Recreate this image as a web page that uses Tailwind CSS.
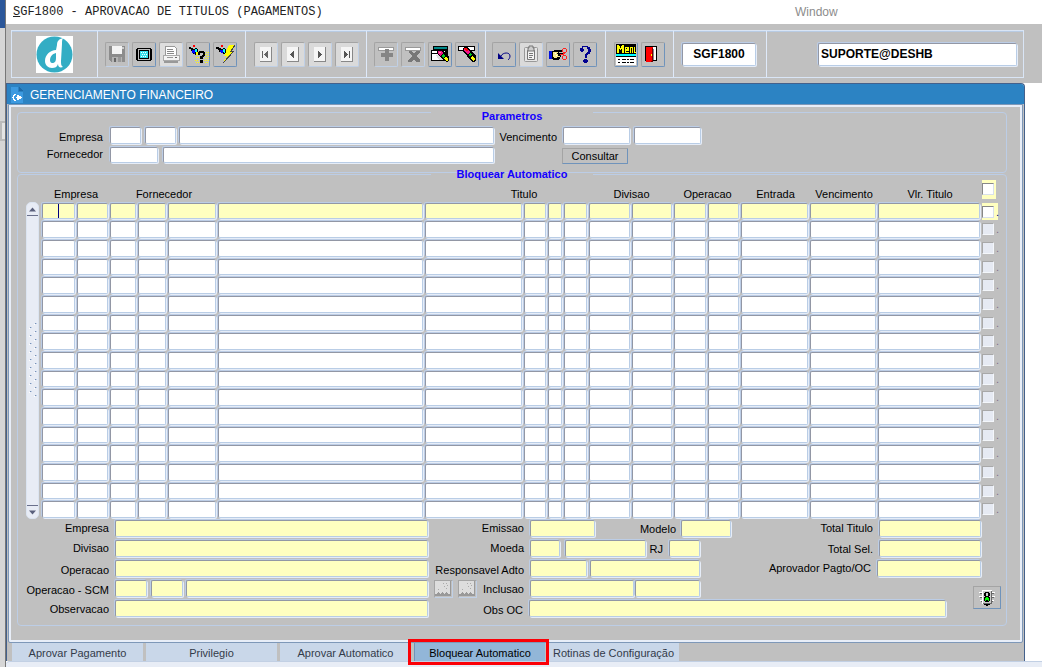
<!DOCTYPE html>
<html lang="pt-BR">
<head>
  <meta charset="UTF-8" />
  <meta name="viewport" content="width=device-width, initial-scale=1.0" />
  <title>SGF1800 - Aprovacao de Titulos</title>
  <script src="https://cdn.jsdelivr.net/npm/@tailwindcss/browser@4"></script>
</head>
<body class="bg-white font-['Liberation_Sans',Arial,sans-serif] text-[11px] leading-4 text-black">
<div class="flex min-h-screen">

  <!-- Edge of the window behind -->
  <div class="flex w-[6px] shrink-0 flex-col border-r border-[#777]">
    <div class="h-7 bg-[#2b579a]"></div>
    <div class="flex-1 bg-[#d6d6d6] pt-[93px]"><div class="h-5 border-2 border-r-0 border-[#bbb] bg-[#e4e4e4]"></div></div>
  </div>

  <div class="flex min-w-0 flex-1 flex-col">
    <!-- Menu bar -->
    <header class="grid h-6 grid-cols-[789fr_247fr] items-center bg-white">
      <h1 class="pl-[7px] font-['Liberation_Mono','Courier_New',monospace] text-[12px] whitespace-nowrap text-[#222]"><span class="underline">S</span>GF1800 - APROVACAO DE TITULOS (PAGAMENTOS)</h1>
      <a href="#" class="text-[12px] text-[#8c8c8c]">Window</a>
    </header>

    <!-- Toolbar -->
    <div class="bg-[#c0c0c0] pt-[6px] pr-[18px] pb-[5px] pl-[5px]">
      <div class="flex h-12 items-stretch border border-[#d9e5f5] shadow-[inset_0_1px_0_#b8cbe3]">
        <div class="flex w-[85px] items-center justify-center">
          <svg class="h-[37px] w-[37px]" viewBox="0 0 37 37">
            <rect width="37" height="37" fill="#fff"/>
            <circle cx="18.500" cy="18.500" r="18" fill="#33adc4"/>
            <path d="M27 2c-4 1-6 3-6 7l-1 5c-6 0-11 5-11 11 0 4 3 7 7 7 3 0 5-1 6-4 0 3 2 4 5 3-2-1-2-3-2-6l1-17c0-3 0-4 1-6z" fill="#fff"/>
            <path d="M20 17c-4 1-6 4-6 7 0 2 1 3 2 3 3 0 4-2 4-5z" fill="#33adc4"/>
          </svg>
        </div>
        <div class="flex items-center gap-[3px] border-l border-[#dfeafa] pr-2 pl-[7px]">
          <button aria-label="Salvar" class="flex h-[25px] w-6 items-center justify-center rounded-[2px] border border-[#c0d0e6] border-t-[#a4a4a4] border-l-[#a4a4a4]">
            <svg class="h-5 w-5" viewBox="0 0 20 20" shape-rendering="crispEdges"><path d="M2 2h16v16H4l-2-2z" fill="#8c8c8c"/><path d="M5 2h10v8H5z" fill="#f4f4f4"/><path d="M15 3h2v2h-2z" fill="#ccc"/><path d="M5 13h10v5H5z" fill="#b4b4b4"/><path d="M11 13h3v5h-3z" fill="#999"/><path d="M7 14h2v4H7z" fill="#666"/></svg>
          </button>
          <button aria-label="Tela" class="flex h-[25px] w-6 items-center justify-center rounded-[2px] border border-[#6f93bb] border-t-[#a4a4a4] border-l-[#a4a4a4]">
            <svg class="h-5 w-5" viewBox="0 0 20 20" shape-rendering="crispEdges"><path d="M3 4h14v1h1v11h-1v1H3v-1H2V5h1z"/><path d="M4 5h12v11H4z" fill="#c0c0c0"/><path d="M5 6h10v9H5z"/><path d="M6 7h8v7H6z" fill="#35e2ee"/><path d="M7 8h1v1H7zm2 0h1v1H9zm2 0h1v1h-1zm-3 2h1v1H8zm2 0h1v1h-1zm2 0h1v1h-1zm-5 2h1v1H7zm2 0h1v1H9zm2 0h1v1h-1z" fill="#fff"/></svg>
          </button>
          <button aria-label="Imprimir" class="flex h-[25px] w-6 items-center justify-center rounded-[2px] border border-[#c0d0e6] border-t-[#a4a4a4] border-l-[#a4a4a4] bg-[#dedede]">
            <svg class="h-5 w-5" viewBox="0 0 20 20" shape-rendering="crispEdges"><path d="M5 2h8l2 2v7H4z" fill="#fff" stroke="#999"/><path d="M6 5h6M6 7h7M6 9h7" stroke="#888"/><path d="M2 11h16v5H2z" fill="#f4f4f4" stroke="#aaa"/><path d="M3 17h14v2H3z" fill="#999"/><path d="M6 13h6v1H6z" fill="#999"/><path d="M14 13h2v1h-2z" fill="#666"/></svg>
          </button>
          <button aria-label="Entrar consulta" class="flex h-[25px] w-6 items-center justify-center rounded-[2px] border border-[#6f93bb] border-t-[#a4a4a4] border-l-[#a4a4a4]">
            <svg class="h-[22px] w-[22px] shrink-0" viewBox="0 0 22 22" shape-rendering="crispEdges"><path d="M6 2h2v2H6z" fill="#f00"/><path d="M2 4h2v1h2v1h2V5h2v1h1v5h-1v1H8v-1H6v-1H5V8H4V6H2z"/><path d="M5 7h3v4H7v-1H5z" fill="#00f"/><path d="M8 6h2v4H9V9H8z" fill="#0ff"/><path d="M9 9h2v2H9zm8 0h1v1h-1zm2 0h1v1h-1zm2 0h1v1h-1zM9 11h2v1H9zm9 0h1v1h-1zm2 0h1v1h-1zm-1 2h1v1h-1zm2 0h1v1h-1zM9 14h1v1H9zm2 0h1v1h-1zm7 1h1v1h-1zm2 0h1v1h-1zM8 17h1v1H8zm2 0h1v1h-1zm7 0h1v1h-1zm2 0h1v1h-1zm2 0h1v1h-1zM9 19h1v1H9zm2 0h1v1h-1zm7 0h1v1h-1zm2 0h1v1h-1z" fill="#ff0"/><path d="M12 8h5v1h1v4h-1v1h-1v2h-3v-3h2v-1h1v-2h-3v2h-2V9h1zm1 9h3v3h-3z"/></svg>
          </button>
          <button aria-label="Executar consulta" class="flex h-[25px] w-6 items-center justify-center rounded-[2px] border border-[#6f93bb] border-t-[#a4a4a4] border-l-[#a4a4a4]">
            <svg class="h-[22px] w-[22px] shrink-0" viewBox="0 0 22 22" shape-rendering="crispEdges"><path d="M7 2h2v2H7z" fill="#f00"/><path d="M2 4h3v1h2v1h2V5h2v1h1v4h-1v1H9v-1H7V9H5V7H4V6H2z"/><path d="M6 7h3v3H7V9H6z" fill="#00f"/><path d="M9 6h2v4h-1V9H9z" fill="#0ff"/><path d="M15 2h6l-4 6h3L9 20l4-7h-3z" fill="#ff0"/><path d="M21 2l-4 6h3L9 20" fill="none" stroke="#444"/></svg>
          </button>
        </div>
        <div class="flex items-center gap-[3px] border-l border-[#dfeafa] pr-[7px] pl-2">
          <button aria-label="Primeiro" class="flex h-[25px] w-6 items-center justify-center rounded-[2px] border border-[#c0d0e6] border-t-[#a4a4a4] border-l-[#a4a4a4] bg-[#dadada]">
            <svg class="h-[15px] w-3" viewBox="0 0 12 15" shape-rendering="crispEdges"><path d="M0 0h12v15H0z" fill="#888"/><path d="M0 0h11v14H0z" fill="#f5f5f5"/><path d="M2 4h1v7H2zM8 4v7H7v-1H6V9H5V8H4V7h1V6h1V5h1V4z" fill="#666"/></svg>
          </button>
          <button aria-label="Anterior" class="flex h-[25px] w-6 items-center justify-center rounded-[2px] border border-[#c0d0e6] border-t-[#a4a4a4] border-l-[#a4a4a4] bg-[#dadada]">
            <svg class="h-[15px] w-3" viewBox="0 0 12 15" shape-rendering="crispEdges"><path d="M0 0h12v15H0z" fill="#888"/><path d="M0 0h11v14H0z" fill="#f5f5f5"/><path d="M7 4v7H6v-1H5V9H4V8H3V7h1V6h1V5h1V4z" fill="#555"/></svg>
          </button>
          <button aria-label="Proximo" class="flex h-[25px] w-6 items-center justify-center rounded-[2px] border border-[#c0d0e6] border-t-[#a4a4a4] border-l-[#a4a4a4] bg-[#dadada]">
            <svg class="h-[15px] w-3" viewBox="0 0 12 15" shape-rendering="crispEdges"><path d="M0 0h12v15H0z" fill="#888"/><path d="M0 0h11v14H0z" fill="#f5f5f5"/><path d="M4 4v7h1v-1h1V9h1V8h1V7H7V6H6V5H5V4z" fill="#555"/></svg>
          </button>
          <button aria-label="Ultimo" class="flex h-[25px] w-6 items-center justify-center rounded-[2px] border border-[#c0d0e6] border-t-[#a4a4a4] border-l-[#a4a4a4] bg-[#dadada]">
            <svg class="h-[15px] w-3" viewBox="0 0 12 15" shape-rendering="crispEdges"><path d="M0 0h12v15H0z" fill="#888"/><path d="M0 0h11v14H0z" fill="#f5f5f5"/><path d="M8 4h1v7H8zM3 4v7h1v-1h1V9h1V8h1V7H6V6H5V5H4V4z" fill="#555"/></svg>
          </button>
        </div>
        <div class="flex items-center gap-[3px] border-l border-[#dfeafa] pr-[6px] pl-[7px]">
          <button aria-label="Inserir" class="flex h-[25px] w-6 items-center justify-center rounded-[2px] border border-[#c0d0e6] border-t-[#a4a4a4] border-l-[#a4a4a4]">
            <svg class="h-5 w-5" viewBox="0 0 20 20" shape-rendering="crispEdges"><path d="M2 3h16v4H2z" fill="#999"/><path d="M3 4h14v2H3z" fill="#fff"/><path d="M9 5h4v4h4v4h-4v4H9v-4H5V9h4z" fill="#858585"/></svg>
          </button>
          <button aria-label="Excluir" class="flex h-[25px] w-6 items-center justify-center rounded-[2px] border border-[#c0d0e6] border-t-[#a4a4a4] border-l-[#a4a4a4]">
            <svg class="h-5 w-5" viewBox="0 0 20 20" shape-rendering="crispEdges"><path d="M2 3h16v4H2z" fill="#999"/><path d="M3 4h14v2H3z" fill="#fff"/><path d="M6 7h3l2 3 2-3h4v2l-4 3 4 4v2h-4l-2-3-3 3H5v-2l4-4-3-3z" fill="#777"/></svg>
          </button>
          <button aria-label="Limpar bloco" class="flex h-[25px] w-6 items-center justify-center rounded-[2px] border border-[#6f93bb] border-t-[#a4a4a4] border-l-[#a4a4a4]">
            <svg class="h-[22px] w-[22px] shrink-0" viewBox="0 0 22 22" shape-rendering="crispEdges"><path d="M4 3h15v9H4z"/><path d="M5 4h13v2H5z" fill="#088"/><path d="M2 7h15v11H2z"/><path d="M3 8h13v2H3zm0 3h8v6H3z" fill="#fff"/><path d="M6 13l4-2 4 6H6z" fill="#ddd"/><path d="M3 15l3-4 4 6H3z" fill="#fff"/><path d="M9 7h4l7 7v4l-2 1-3-1-7-8V8z"/><path d="M9 8h3l2 2-3 3-2-3z" fill="#f0108a"/><path d="M10 9h2v1h-2z" fill="#f99"/><path d="M14 11l2 2-2 2-2-2z" fill="#0c2"/><path d="M16 14l3 1v3h-2l-2-2z" fill="#ff0"/></svg>
          </button>
          <button aria-label="Limpar registro" class="flex h-[25px] w-6 items-center justify-center rounded-[2px] border border-[#6f93bb] border-t-[#a4a4a4] border-l-[#a4a4a4]">
            <svg class="h-[22px] w-[22px] shrink-0" viewBox="0 0 22 22" shape-rendering="crispEdges"><path d="M2 3h17v5H2z"/><path d="M3 4h15v3H3z" fill="#fff"/><path d="M8 4h4l8 9v4l-2 2h-2L7 8V5z"/><path d="M8 5h3l3 4-2 3-4-5z" fill="#f0108a"/><path d="M8 5h2l2 2-1 1-3-2z" fill="#f00"/><path d="M14 10l2 1-2 3-2-2z" fill="#0c2"/><path d="M16 13l3 2v1l-2 2-3-3z" fill="#ff0"/></svg>
          </button>
        </div>
        <div class="flex items-center gap-[3px] border-l border-[#dfeafa] pr-2 pl-[6px]">
          <button aria-label="Desfazer" class="flex h-[25px] w-6 items-center justify-center rounded-[2px] border border-[#6f93bb] border-t-[#a4a4a4] border-l-[#a4a4a4]">
            <svg class="h-5 w-5" viewBox="0 0 20 20"><path d="M4 9v6h6z" fill="#000084"/><path d="M7 12c2-4 9-4 9 0 0 2-1 3-2 4" fill="none" stroke="#000084"/></svg>
          </button>
          <button aria-label="Colar" class="flex h-[25px] w-6 items-center justify-center rounded-[2px] border border-[#c0d0e6] border-t-[#a4a4a4] border-l-[#a4a4a4] bg-[#dadada]">
            <svg class="h-5 w-5" viewBox="0 0 20 20"><rect x="3.500" y="3.500" width="13" height="14" rx="1" fill="#e6e6e6" stroke="#999"/><path d="M6.500 6.500h7v9h-7z" fill="#f4f4f4" stroke="#777"/><path d="M8 4V2h4v2h1v3H7V4z" fill="#ccc" stroke="#777"/><path d="M8 9.500h4M8 11.500h4M8 13.500h3" stroke="#777"/></svg>
          </button>
          <button aria-label="Recortar" class="flex h-[25px] w-6 items-center justify-center rounded-[2px] border border-[#6f93bb] border-t-[#a4a4a4] border-l-[#a4a4a4]">
            <svg class="h-5 w-5" viewBox="0 0 20 20" shape-rendering="crispEdges"><path d="M1 7h3v8H1z" fill="#0010e0"/><path d="M4 7h2V6h9v2h-4v1h4v2h-2v2h-1v2h-1v1H5v-1H4z"/><path d="M5 8h5v1H9v1h5v0h-4v2h2v1H9v1H6v-1H5z" fill="#f4e98a"/><path d="M7 9h1v1H7zm1 2h1v1H8z" fill="#fff"/><g fill="none" stroke="#f22"><circle cx="16.500" cy="6.500" r="2"/><circle cx="16.500" cy="13.500" r="2"/><path d="M12 10.500h3l2-2m-2 2l2 1"/></g></svg>
          </button>
          <button aria-label="Ajuda" class="flex h-[25px] w-6 items-center justify-center rounded-[2px] border border-[#6f93bb] border-t-[#a4a4a4] border-l-[#a4a4a4]">
            <svg class="h-5 w-5" viewBox="0 0 20 20" shape-rendering="crispEdges"><path d="M7 2h6v1h2v2h1v3h-1v2h-2v1h-1v3h-2v-4h1V9h1V8h1V5h-1V3H8v2h1v2H8v1H6V7H5V4h2zM9 15h3v1h1v2h-1v1H9v-1H8v-2h1z" fill="#000090"/></svg>
          </button>
        </div>
        <div class="flex items-center gap-[3px] border-l border-[#dfeafa] pr-2 pl-2">
          <button aria-label="Menu" class="flex h-[25px] w-6 items-center justify-center rounded-[2px] border border-[#6f93bb] border-t-[#a4a4a4] border-l-[#a4a4a4]">
            <svg class="h-[22px] w-[22px] shrink-0" viewBox="0 0 22 22" shape-rendering="crispEdges"><path d="M1 1h20v10H1z"/><path d="M2 2h2v1h1v2h1V3h1V2h2v8H7V6H6v1H5V6H4v4H2zm8 2h4v4h-3v1h3v1h-4zm1 1v1h1V5zm4-1h3v6h-1V5h-1v5h-1zm4 0h1v5h1v1h-2z" fill="#ff0"/><path d="M1 11h20v2H1z" fill="#0ff"/><path d="M1 13h20v1H1z"/><path d="M1 14h20v8H1z" fill="#fff"/><path d="M3 16h2v1H3zm4 0h4v1H7zm5 0h2v1h-2zm3 0h4v1h-4zM3 19h2v1H3zm4 0h4v1H7zm5 0h2v1h-2zm3 0h4v1h-4z"/></svg>
          </button>
          <button aria-label="Sair" class="flex h-[25px] w-6 items-center justify-center rounded-[2px] border border-[#6f93bb] border-t-[#a4a4a4] border-l-[#a4a4a4]">
            <svg class="h-5 w-5" viewBox="0 0 20 20" shape-rendering="crispEdges"><path d="M2 2h12v15H2z"/><path d="M10 3h3v13h-3z" fill="#fff"/><path d="M10 5h1v11h-1z" fill="#888"/><path d="M3 3h7v13L8 18H3z" fill="#f00"/><path d="M8 10h1v2H8z" fill="#ff0"/><path d="M9 4h1v14H8v-1h1z" fill="#700"/></svg>
          </button>
        </div>
        <div class="flex w-[93px] items-center border-l border-[#dfeafa] pr-[10px] pl-2">
          <input aria-label="Programa" value="SGF1800" readonly class="h-[23px] w-full min-w-0 rounded-[2px] border border-[#b9cde6] border-t-[#9297a5] border-l-[#9297a5] bg-white text-center text-[12px] font-bold shadow-[1px_1px_0_#e6edf8,-1px_-1px_0_#bccde6]" />
        </div>
        <div class="flex min-w-0 flex-1 items-center border-l border-[#dfeafa] pr-[6px] pl-[51px]">
          <input aria-label="Usuario" value="SUPORTE@DESHB" readonly class="h-[23px] w-full min-w-0 rounded-[2px] border border-[#b9cde6] border-t-[#9297a5] border-l-[#9297a5] bg-white px-[2px] text-[12px] font-bold shadow-[1px_1px_0_#e6edf8,-1px_-1px_0_#bccde6]" />
        </div>
      </div>
    </div>

    <!-- Form window -->
    <div class="mr-[17px] flex flex-1 flex-col rounded-tr-[4px] border-x border-t border-[#44618c] bg-[#c0c0c0]">
      <div class="flex h-5 items-center gap-[7px] rounded-tr-[3px] bg-[#2c83c3] pt-px pl-1 text-white">
        <svg class="h-4 w-3" viewBox="0 0 12 16" shape-rendering="crispEdges"><path d="M0 0h7v5h5v11H0z" fill="#3d9ae0"/><path d="M8 0l4 4H8z" fill="#1f6aa8"/><path d="M3 7h2v1H4v1H3v3h1v1h1v1H3v-1H2v-2H1v-1h1V8h1zm3 1h2v1h2v1h1v1h-1v1H8v1H6v-2H5v-1h1z" fill="#fff"/></svg>
        <h2 class="text-[12px]">GERENCIAMENTO FINANCEIRO</h2>
      </div>

      <main class="mr-px ml-px flex-1 rounded-b-[2px] border border-[#7e98b8] pb-4 shadow-[inset_0_-2px_0_#e8eef8,inset_2px_2px_0_#e8eef8,inset_-2px_0_0_#e8eef8]">
        <!-- Parametros -->
        <fieldset class="mt-[6px] mr-[15px] ml-2 min-w-0 rounded-[4px] border border-[#bccde6]">
          <legend class="mx-auto h-[2px] w-[162px] text-center text-[11px] leading-[10px] font-bold text-[#1400ff]">Parametros</legend>
          <div class="grid grid-cols-[476fr_512fr] gap-y-[2px] pt-3 pb-2">
            <div class="flex items-center">
              <label for="pEmpresa" class="w-[85px] shrink-0 pt-1 text-right">Empresa</label>
              <input id="pEmpresa" class="ml-[7px] h-[17px] w-[31px] rounded-[2px] border border-[#b9cde6] border-t-[#9297a5] border-l-[#9297a5] bg-white shadow-[1px_1px_0_#e6edf8,-1px_-1px_0_#bccde6]" />
              <input aria-label="Filial" class="ml-1 h-[17px] w-[31px] rounded-[2px] border border-[#b9cde6] border-t-[#9297a5] border-l-[#9297a5] bg-white shadow-[1px_1px_0_#e6edf8,-1px_-1px_0_#bccde6]" />
              <input aria-label="Nome da empresa" class="ml-[3px] h-[17px] min-w-0 flex-1 rounded-[2px] border border-[#b9cde6] border-t-[#9297a5] border-l-[#9297a5] bg-white shadow-[1px_1px_0_#e6edf8,-1px_-1px_0_#bccde6]" />
            </div>
            <div class="flex items-center">
              <label for="pVenc" class="w-[63px] shrink-0 pt-1 text-right">Vencimento</label>
              <input id="pVenc" class="ml-[6px] h-[17px] w-[67px] rounded-[2px] border border-[#b9cde6] border-t-[#9297a5] border-l-[#9297a5] bg-white shadow-[1px_1px_0_#e6edf8,-1px_-1px_0_#bccde6]" />
              <input aria-label="Vencimento final" class="ml-1 h-[17px] w-[67px] rounded-[2px] border border-[#b9cde6] border-t-[#9297a5] border-l-[#9297a5] bg-white shadow-[1px_1px_0_#e6edf8,-1px_-1px_0_#bccde6]" />
            </div>
            <div class="flex h-[17px] items-start">
              <label for="pForn" class="w-[85px] shrink-0 text-right leading-[14px]">Fornecedor</label>
              <input id="pForn" class="ml-[7px] h-4 w-12 rounded-[2px] border border-[#b9cde6] border-t-[#9297a5] border-l-[#9297a5] bg-white shadow-[1px_1px_0_#e6edf8,-1px_-1px_0_#bccde6]" />
              <input aria-label="Nome do fornecedor" class="ml-[5px] h-4 min-w-0 flex-1 rounded-[2px] border border-[#b9cde6] border-t-[#9297a5] border-l-[#9297a5] bg-white shadow-[1px_1px_0_#e6edf8,-1px_-1px_0_#bccde6]" />
            </div>
            <div class="h-[17px] pt-px pl-[68px]">
              <button class="h-4 w-[66px] rounded-[1px] border border-[#6f93bb] border-t-[#a4a4a4] border-l-[#a4a4a4] leading-[14px]">Consultar</button>
            </div>
          </div>
        </fieldset>

        <!-- Bloquear Automatico -->
        <fieldset class="mr-[15px] ml-2 min-w-0 rounded-[4px] border border-[#bccde6]">
          <legend class="mx-auto h-[2px] w-[162px] text-center text-[11px] leading-[2px] font-bold text-[#1400ff]">Bloquear Automatico</legend>
          <div class="flex items-end pt-[5px] pr-[6px] pl-2">
            <div class="mr-[3px] mb-px flex h-[317px] w-[13px] shrink-0 flex-col items-center rounded-[5px] border border-[#dbe4f1] bg-[#e8ecf5]">
              <button aria-label="Subir" class="flex h-[13px] w-full shrink-0 items-center justify-center border-b border-[#6a708c]"><svg class="h-[5px] w-[7px]" viewBox="0 0 7 4"><path d="M0 4l3.500-4L7 4z" fill="#5a607c"/></svg></button>
              <svg class="my-auto h-[76px] w-2" viewBox="0 0 8 76" shape-rendering="crispEdges"><defs><pattern id="grip" width="8" height="8" patternUnits="userSpaceOnUse"><path d="M6 0h1v1H6zM1 4h1v1H1z" fill="#7790b5"/><path d="M5 1h1v1H5zM0 5h1v1H0z" fill="#fff"/><path d="M7 0h1v1H7zM2 4h1v1H2z" fill="#bccde6"/></pattern></defs><rect width="8" height="76" fill="url(#grip)"/></svg>
              <button aria-label="Descer" class="flex h-[13px] w-full shrink-0 items-center justify-center border-t border-[#6a708c]"><svg class="h-[5px] w-[7px]" viewBox="0 0 7 4"><path d="M0 0h7L3.500 4z" fill="#5a607c"/></svg></button>
            </div>
            <table class="w-full table-fixed border-collapse">
              <colgroup>
                <col class="w-[35px]" /><col class="w-[33px]" /><col class="w-[28px]" /><col class="w-[30px]" /><col class="w-[50px]" /><col class="w-[207px]" />
                <col class="w-[99px]" /><col class="w-[24px]" /><col class="w-[16px]" /><col class="w-[25px]" /><col class="w-[43px]" /><col class="w-[42px]" />
                <col class="w-[34px]" /><col class="w-[33px]" /><col class="w-[69px]" /><col class="w-[68px]" /><col class="w-[104px]" /><col class="w-[18px]" />
              </colgroup>
              <thead>
                <tr class="h-[23px] [&>th]:p-0 [&>th]:pb-px [&>th]:align-bottom [&>th]:font-normal">
                  <th colspan="2" class="text-center">Empresa</th>
                  <th colspan="3" class="text-center">Fornecedor</th>
                  <th></th>
                  <th colspan="4" class="text-center"><span class="pl-[34px]">Titulo</span></th>
                  <th colspan="2" class="text-center">Divisao</th>
                  <th colspan="2" class="text-center">Operacao</th>
                  <th class="text-center">Entrada</th>
                  <th class="text-center">Vencimento</th>
                  <th class="text-center">Vlr. Titulo</th>
                  <th class="text-left"><span class="mb-[3px] flex h-[19px] w-[14px] items-start bg-[#ffffc0] pt-[3px]"><input type="checkbox" aria-label="Selecionar todos" class="h-3 w-3 appearance-none border border-[#d8e0ec] border-t-[#888] border-l-[#888] bg-white" /></span></th>
                </tr>
              </thead>
              <tbody id="rows"></tbody>
            </table>
          </div>

          <!-- Detalhes do titulo -->
          <div id="details" class="grid auto-rows-[20px] grid-cols-[minmax(0,410fr)_minmax(0,304fr)_minmax(0,274fr)] pb-[5px] [&_input]:h-[17px] [&_input]:min-w-0 [&_input]:rounded-[2px] [&_input]:border [&_input]:border-[#b9cde6] [&_input]:border-t-[#9297a5] [&_input]:border-l-[#9297a5] [&_input]:bg-[#ffffc0] [&_input]:shadow-[1px_1px_0_#e6edf8,-1px_-1px_0_#bccde6]">
            <div class="flex items-start">
              <label for="dEmpresa" class="mr-[6px] w-[91px] shrink-0 text-right">Empresa</label>
              <input id="dEmpresa" class="flex-1" />
            </div>
            <div class="flex items-start">
              <label for="dEmissao" class="mr-[6px] w-24 shrink-0 text-right">Emissao</label>
              <input id="dEmissao" class="w-[65px]" />
              <label for="dModelo" class="mr-[5px] ml-auto pt-px">Modelo</label>
              <input id="dModelo" class="mr-px w-[50px]" />
            </div>
            <div class="flex items-start justify-end pr-[25px]">
              <label for="dTotal" class="mr-[6px]">Total Titulo</label>
              <input id="dTotal" class="w-[102px]" />
            </div>

            <div class="flex items-start">
              <label for="dDivisao" class="mr-[6px] w-[91px] shrink-0 text-right">Divisao</label>
              <input id="dDivisao" class="flex-1" />
            </div>
            <div class="flex items-start pr-8">
              <label for="dMoeda" class="mr-[6px] w-24 shrink-0 text-right">Moeda</label>
              <input id="dMoeda" class="w-[30px]" />
              <input aria-label="Nome da moeda" class="ml-[5px] flex-1" />
              <label for="dRj" class="mr-[6px] ml-1 pt-px">RJ</label>
              <input id="dRj" class="w-[31px]" />
            </div>
            <div class="flex items-start justify-end pr-[25px]">
              <label for="dSel" class="mr-[6px] pt-px">Total Sel.</label>
              <input id="dSel" class="w-[102px]" />
            </div>

            <div class="flex items-start">
              <label for="dOperacao" class="mr-[6px] w-[91px] shrink-0 pt-[2px] text-right">Operacao</label>
              <input id="dOperacao" class="flex-1" />
            </div>
            <div class="flex items-start pr-8">
              <label for="dResp" class="mr-[6px] w-24 shrink-0 pt-[2px] text-right whitespace-nowrap">Responsavel Adto</label>
              <input id="dResp" class="w-[57px]" />
              <input aria-label="Nome do responsavel" class="ml-[3px] flex-1" />
            </div>
            <div class="flex items-start justify-end pr-[25px]">
              <label for="dAprov" class="mr-[6px]">Aprovador Pagto/OC</label>
              <input id="dAprov" class="w-[104px]" />
            </div>

            <div class="flex items-start">
              <label for="dScm" class="mr-[6px] w-[91px] shrink-0 pt-[2px] text-right">Operacao - SCM</label>
              <input id="dScm" class="w-8" />
              <input aria-label="Codigo SCM" class="ml-1 w-8" />
              <input aria-label="Descricao SCM" class="ml-[3px] flex-1" />
            </div>
            <div class="flex items-start pr-8">
              <button aria-label="Anexo 1" class="ml-[6px] h-[18px] w-[19px] shrink-0 border border-[#c0d0e6] border-t-[#a4a4a4] border-l-[#a4a4a4]"><svg class="h-4 w-4" viewBox="0 0 16 16" shape-rendering="crispEdges"><path d="M0 0h16v15H0z" fill="#999"/><path d="M0 0h15v13h-2l-2-2-2 2-2-2-2 2-2-2-2 2H0z" fill="#ddd"/><path d="M8 2h1v1H8zm3 0h1v1h-1zM9 5h1v1H9zm3-1h1v1h-1zm-1 3h1v1h-1zM3 8h1v1H3z" fill="#aaa"/></svg></button>
              <button aria-label="Anexo 2" class="ml-[5px] h-[18px] w-[19px] shrink-0 border border-[#c0d0e6] border-t-[#a4a4a4] border-l-[#a4a4a4]"><svg class="h-4 w-4" viewBox="0 0 16 16" shape-rendering="crispEdges"><path d="M0 0h16v15H0z" fill="#999"/><path d="M0 0h15v13h-2l-2-2-2 2-2-2-2 2-2-2-2 2H0z" fill="#ddd"/><path d="M8 2h1v1H8zm3 0h1v1h-1zM9 5h1v1H9zm3-1h1v1h-1zm-1 3h1v1h-1zM3 8h1v1H3z" fill="#aaa"/></svg></button>
              <label for="dInclusao" class="mr-[6px] w-[47px] shrink-0 pt-px text-right">Inclusao</label>
              <input id="dInclusao" class="w-[104px]" />
              <input aria-label="Hora da inclusao" class="ml-px flex-1" />
            </div>
            <div class="flex items-start justify-end pt-[6px] pr-[5px]">
              <button aria-label="Processar" class="flex h-[23px] w-7 shrink-0 items-center justify-center border border-[#6f93bb] border-t-[#a4a4a4] border-l-[#a4a4a4]">
                <svg class="h-[18px] w-[18px]" viewBox="0 0 18 18" shape-rendering="crispEdges"><path d="M1 3h16v1H1zm0 4h16v1H1zm1 4h14v1H2z" fill="#fff"/><path d="M2 4h14v1H2zm0 4h14v1H2zm1 4h12v1H3z" fill="#666"/><path d="M4 1h10v14H4z" fill="#fff"/><path d="M5 2h9v13H5z" fill="#666"/><path d="M5 2h8v12H5z" fill="#ccc"/><path d="M7 3h4v1h1v3h-1v1h1v4h-1v1H7v-1H6V8h1V7H6V4h1z"/><path d="M8 4h2v3H8z" fill="#ccc"/><path d="M7 9h1V8h2v1h1v3h-1v-1H8v1H7z" fill="#0f0"/><path d="M6 15h6v1H6zm2 1h2v1H8z"/></svg>
              </button>
            </div>

            <div class="flex items-start">
              <label for="dObs" class="mr-[6px] w-[91px] shrink-0 pt-px text-right">Observacao</label>
              <input id="dObs" class="flex-1" />
            </div>
            <div class="col-span-2 flex items-start pr-[60px]">
              <label for="dObsOc" class="mr-[6px] w-[95px] shrink-0 pt-[2px] text-right">Obs OC</label>
              <input id="dObsOc" class="flex-1" />
            </div>
          </div>
        </fieldset>
      </main>

      <!-- Abas -->
      <nav class="ml-[5px] flex h-[18px] text-center leading-5 text-[#333b4a]">
        <a href="#" class="w-[134px] border-r-[3px] border-[#c0c0c0] bg-[#c9d7e9]">Aprovar Pagamento</a>
        <a href="#" class="w-[134px] border-r-[3px] border-[#c0c0c0] bg-[#c9d7e9]">Privilegio</a>
        <a href="#" class="w-[134px] border-r-[3px] border-[#c0c0c0] bg-[#c9d7e9]">Aprovar Automatico</a>
        <a href="#" class="relative w-[134px] border-r-[3px] border-l border-r-[#c0c0c0] border-l-[#6f93bb] bg-[#92b6d8] text-black">Bloquear Automatico<span class="absolute -top-1 -right-1 -bottom-1 -left-[7px] border-[3px] border-[#fb0007]"></span></a>
        <a href="#" class="w-[134px] border-r-[3px] border-[#c0c0c0] bg-[#c9d7e9] whitespace-nowrap">Rotinas de Configuração</a>
      </nav>
    </div>
    <footer class="h-[6px] rounded-tl-[4px] border-t border-[#c2d0e4] bg-[#e8edf6]"></footer>
  </div>
</div>

<script>
  const ROWS = 17;
  const FIELDS = 17;
  const body = document.getElementById("rows");

  for (let r = 0; r < ROWS; r++) {
    const active = r === 0;
    const short = r % 3 === 0;
    const tr = document.createElement("tr");
    tr.className = short ? "h-[18px]" : "h-[19px]";

    for (let c = 0; c < FIELDS; c++) {
      const td = document.createElement("td");
      td.className = "relative p-0 pr-[2px] align-top";
      const input = document.createElement("input");
      input.setAttribute("aria-label", "Linha " + (r + 1) + " campo " + (c + 1));
      input.className = "block w-full rounded-[2px] border border-[#b9cde6] border-t-[#9297a5] border-l-[#9297a5] shadow-[1px_1px_0_#e6edf8,-1px_-1px_0_#bccde6] " +
        (short ? "h-4 " : "h-[17px] ") + (active ? "bg-[#ffffc0]" : "bg-white");
      td.appendChild(input);
      if (active && c === 0) {
        const caret = document.createElement("span");
        caret.className = "absolute top-px left-4 h-[14px] w-px bg-[#000080]";
        td.appendChild(caret);
      }
      tr.appendChild(td);
    }

    const td = document.createElement("td");
    td.className = "p-0 align-top";
    td.innerHTML = active
      ? '<span class="flex h-[17px] w-4 items-center bg-[#ffffc0]"><input type="checkbox" aria-label="Selecionar" class="h-3 w-3 shrink-0 appearance-none border border-[#d8e0ec] border-t-[#888] border-l-[#888] bg-white" /><span class="pl-[2px] leading-3 text-[#000080]">.</span></span>'
      : '<span class="flex h-4 w-4 items-center"><input type="checkbox" aria-label="Selecionar" disabled class="h-3 w-3 shrink-0 appearance-none border border-[#f4f7fb] border-t-[#a8a8a8] border-l-[#a8a8a8] bg-[#e6eaf3]" /><span class="pl-[2px] leading-3 text-[#80708c]">.</span></span>';
    tr.appendChild(td);
    body.appendChild(tr);
  }
</script>
</body>
</html>
